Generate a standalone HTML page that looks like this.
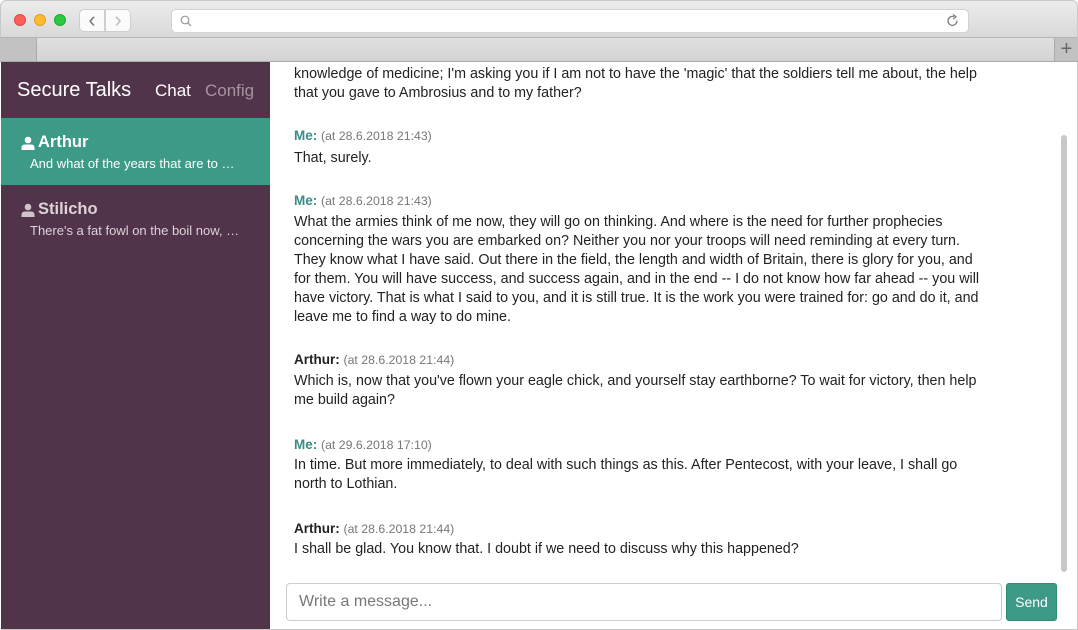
<!DOCTYPE html>
<html><head><style>
*{margin:0;padding:0;box-sizing:border-box}
body{width:1078px;height:630px;overflow:hidden;background:#fff;font-family:"Liberation Sans",sans-serif;position:relative}
.chrome{position:absolute;left:0;top:0;width:1078px;height:38px;background:linear-gradient(#ececec,#d9d9d9);border-radius:6px 6px 0 0;border:1px solid #c8c8c8;border-bottom:1px solid #b5b5b5}
.dot{position:absolute;top:13px;width:12px;height:12px;border-radius:50%}
.nav{position:absolute;top:8px;width:26px;height:23px;background:#fbfbfb;border:1px solid #cfcfcf;color:#777;font-size:22px;text-align:center;line-height:19px}
.url{position:absolute;left:170px;top:8px;width:798px;height:24px;background:#fff;border:1px solid #d3d3d3;border-radius:5px}
.tabs{position:absolute;left:0;top:38px;width:1078px;height:24px;background:linear-gradient(#e0e0e0,#d3d3d3);border-bottom:1px solid #aaa}
.side{position:absolute;left:1px;top:62px;width:269px;height:568px;background:#51344a}
.t{position:absolute;white-space:nowrap}
.msg{position:absolute;left:294px;font-size:14.3px;color:#222;line-height:19px;width:720px}
.h{font-size:13.5px;font-weight:bold}
.h span{font-weight:normal;font-size:12.3px;color:#777}
.me{color:#3b8d84}
</style></head><body>
<div class="chrome">
<div class="dot" style="left:13px;background:#fc5f57;border:1px solid #de4a42"></div>
<div class="dot" style="left:33px;background:#fdbc2e;border:1px solid #dea024"></div>
<div class="dot" style="left:53px;background:#29c940;border:1px solid #1fab30"></div>
<div class="nav" style="left:78px;border-radius:5px 0 0 5px">‹</div>
<div class="nav" style="left:104px;border-radius:0 5px 5px 0;color:#bbb">›</div>
<div class="url"><svg style="position:absolute;left:8px;top:5px" width="12" height="12"><circle cx="5" cy="5" r="3.8" fill="none" stroke="#999" stroke-width="1.2"/><line x1="8" y1="8" x2="11" y2="11" stroke="#999" stroke-width="1.3"/></svg>
<svg style="position:absolute;right:8px;top:4px" width="14" height="14"><path d="M11 6.5A4.5 4.5 0 1 1 8 2.6" fill="none" stroke="#777" stroke-width="1.2"/><path d="M7 0.5L10 2.8L7 5" fill="none" stroke="#777" stroke-width="1.2"/></svg></div>
</div>
<div class="tabs"><div style="position:absolute;left:0;top:0;width:37px;height:23px;background:#c2c2c2;border-right:1px solid #aaa"></div>
<div style="position:absolute;right:0;top:0;width:24px;height:23px;background:#c2c2c2;border-left:1px solid #aaa;color:#666;font-size:20px;text-align:center;line-height:22px">+</div></div>
<div class="side">
<div class="t" style="left:16px;top:17px;font-size:20px;color:#fff">Secure Talks</div>
<div class="t" style="left:154px;top:19px;font-size:17px;color:#fff">Chat</div>
<div class="t" style="left:204px;top:19px;font-size:17px;color:#a7949f">Config</div>
<div style="position:absolute;left:0;top:56px;width:269px;height:67px;background:#3d9a87"></div>
<svg style="position:absolute;left:20px;top:74px" width="14" height="14"><circle cx="7" cy="4" r="3.3" fill="#fff"/><path d="M0.5 14V12Q0.5 8.5 4 8.5H10Q13.5 8.5 13.5 12V14Z" fill="#fff"/></svg>
<div class="t" style="left:37px;top:71px;font-size:16.5px;font-weight:bold;color:#fff">Arthur</div>
<div class="t" style="left:29px;top:94px;font-size:13px;color:#fff">And what of the years that are to …</div>
<svg style="position:absolute;left:20px;top:141px" width="14" height="14"><circle cx="7" cy="4" r="3.3" fill="#cdc4c9"/><path d="M0.5 14V12Q0.5 8.5 4 8.5H10Q13.5 8.5 13.5 12V14Z" fill="#cdc4c9"/></svg>
<div class="t" style="left:37px;top:138px;font-size:16.5px;font-weight:bold;color:#ddd3d8">Stilicho</div>
<div class="t" style="left:29px;top:161px;font-size:13px;color:#ddd3d8">There's a fat fowl on the boil now, …</div>
</div>
<div class="msg" style="top:65px">knowledge of medicine; I'm asking you if I am not to have the 'magic' that the soldiers tell me about, the help<br>that you gave to Ambrosius and to my father?</div>
<div class="msg h me" style="top:126px">Me: <span>(at 28.6.2018 21:43)</span></div>
<div class="msg" style="top:149px">That, surely.</div>
<div class="msg h me" style="top:191px">Me: <span>(at 28.6.2018 21:43)</span></div>
<div class="msg" style="top:213px">What the armies think of me now, they will go on thinking. And where is the need for further prophecies<br>concerning the wars you are embarked on? Neither you nor your troops will need reminding at every turn.<br>They know what I have said. Out there in the field, the length and width of Britain, there is glory for you, and<br>for them. You will have success, and success again, and in the end -- I do not know how far ahead -- you will<br>have victory. That is what I said to you, and it is still true. It is the work you were trained for: go and do it, and<br>leave me to find a way to do mine.</div>
<div class="msg h" style="top:350px">Arthur: <span>(at 28.6.2018 21:44)</span></div>
<div class="msg" style="top:372px">Which is, now that you've flown your eagle chick, and yourself stay earthborne? To wait for victory, then help<br>me build again?</div>
<div class="msg h me" style="top:435px">Me: <span>(at 29.6.2018 17:10)</span></div>
<div class="msg" style="top:456px">In time. But more immediately, to deal with such things as this. After Pentecost, with your leave, I shall go<br>north to Lothian.</div>
<div class="msg h" style="top:519px">Arthur: <span>(at 28.6.2018 21:44)</span></div>
<div class="msg" style="top:540px">I shall be glad. You know that. I doubt if we need to discuss why this happened?</div>
<div style="position:absolute;left:1061px;top:135px;width:6px;height:437px;background:#c8c8c8;border-radius:3px"></div>
<div style="position:absolute;left:1077px;top:62px;width:1px;height:568px;background:#c8c8c8"></div>
<div style="position:absolute;left:0;top:629px;width:1078px;height:1px;background:#c8c8c8"></div>
<div style="position:absolute;left:286px;top:583px;width:716px;height:38px;border:1px solid #ccc;border-radius:4px;font-size:16px;color:#777;padding:9px 12px">Write a message...</div>
<div style="position:absolute;left:1006px;top:583px;width:51px;height:38px;background:#3d9a87;border:1px solid #2f8a6f;border-radius:3px;color:#fff;font-size:14px;text-align:center;line-height:36px">Send</div>
</body></html>
